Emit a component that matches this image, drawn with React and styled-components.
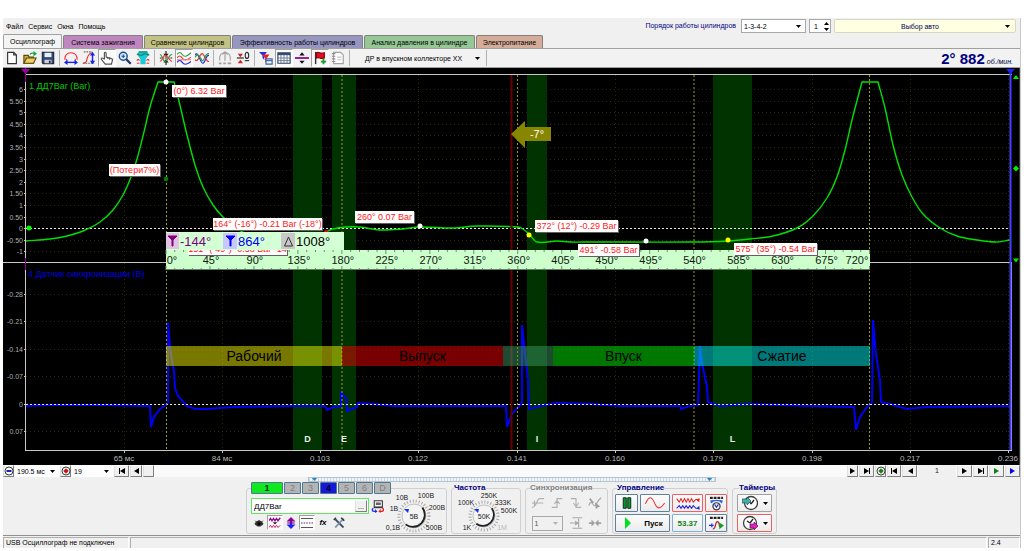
import React from "react";
import styled, { createGlobalStyle, css } from "styled-components";

const GlobalStyle = createGlobalStyle`
  *, *::before, *::after { box-sizing: border-box; }
  body { margin: 0; background: #fff; }
  body, button, input, select, legend { font-family: "Liberation Sans", Arial, sans-serif; font-size: 7px; color: #000; }
  button, input, select, fieldset, legend { margin: 0; padding: 0; }
  svg { display: block; }
`;

/* ---------- frame ---------- */
const Frame = styled.div`
  margin: 18px 3px 0;
  background: #f0f0f0;
  border-right: 1px solid #c8c8c8;
`;
const TopRow = styled.header`
  display: flex;
  justify-content: space-between;
  align-items: stretch;
  height: 30px;
`;
const TopLeft = styled.div`
  display: flex;
  flex-direction: column;
  justify-content: space-between;
`;
const Menu = styled.nav`
  display: flex;
  gap: 5px;
  padding: 4px 3px 0;
  line-height: 9px;
`;
const MenuLink = styled.a`
  color: #000;
  text-decoration: none;
`;
const Tabs = styled.div`
  display: flex;
  align-items: flex-end;
  gap: 1px;
`;
const Tab = styled.button`
  height: ${(p) => (p.$active ? 14 : 13)}px;
  width: ${(p) => p.$w}px;
  border: 1px solid ${(p) => (p.$active ? "#a0a0a0" : "#808080")};
  border-bottom: 0;
  border-radius: 2px 2px 0 0;
  background: ${(p) => p.$bg};
  white-space: nowrap;
`;
const TopRight = styled.div`
  display: flex;
  gap: 3px;
  height: 15px;
  padding: 1px 4px 0 0;
`;
const FieldLabel = styled.label`
  color: #000080;
  line-height: 13px;
  margin-right: 2px;
`;
const SelectWrap = styled.span`
  display: grid;
  align-items: center;
  width: ${(p) => p.$w}px;
  height: ${(p) => p.$h || 14}px;
  background: ${(p) => (p.$flat ? "transparent" : "#fff")};
  border: ${(p) => (p.$bare ? 0 : "1px solid #a8a8a8")};
  > * { grid-area: 1 / 1; }
  > svg { justify-self: end; margin-right: 4px; pointer-events: none; }
`;
const SelectBox = styled.select`
  appearance: none;
  width: 100%;
  border: 0;
  background: transparent;
  padding-left: 2px;
  outline: 0;
  color: ${(p) => p.$color || "#000"};
`;
const Spinner = styled.span`
  display: flex;
  align-items: center;
  width: 22px;
  height: 14px;
  background: #fff;
  border: 1px solid #a8a8a8;
`;
const SpinInput = styled.input`
  width: 12px;
  border: 0;
  background: transparent;
  padding-left: 4px;
`;
const SpinButtons = styled.span`
  display: flex;
  flex-direction: column;
  gap: 1px;
`;
const SpinButton = styled.button`
  border: 0;
  background: none;
  width: 8px;
  height: 5px;
  display: grid;
  place-items: center;
`;
const CarButton = styled.button`
  display: grid;
  grid-template-columns: 1fr 10px;
  align-items: center;
  width: 182px;
  height: 14px;
  background: #ffffe1;
  border: 1px solid #d8d8c8;
  border-radius: 2px;
  color: #000060;
`;

/* ---------- toolbar ---------- */
const Toolbar = styled.div`
  display: flex;
  align-items: center;
  height: 20px;
  border-top: 1px solid #a0a0a0;
  border-bottom: 1px solid #a0a0a0;
  background: #f2f2f2;
`;
const ToolButton = styled.button`
  display: grid;
  place-items: center;
  width: 18px;
  height: 18px;
  border: 1px solid transparent;
  background: transparent;
  ${(p) => p.$down && css`
    background: #fafafa;
    border-color: #a0a0a0 #fff #fff #a0a0a0;
  `}
`;
const Divider = styled.span`
  width: 1px;
  height: 16px;
  margin: 0 2px;
  background: #b0b0b0;
`;
const ProbeButton = styled.button`
  display: flex;
  align-items: center;
  justify-content: space-between;
  width: 132px;
  border: 0;
  background: none;
  padding: 0 4px 0 13px;
  white-space: nowrap;
`;
const Rpm = styled.output`
  margin-left: auto;
  padding-right: 7px;
  color: #000080;
  font-size: 15px;
  font-weight: bold;
  small { font-size: 7px; font-weight: normal; font-style: italic; color: #000040; margin-left: 2px; }
`;

/* ---------- chart ---------- */
const Chart = styled.svg`
  width: 100%;
  height: auto;
  background: #000;
  text { font-family: "Liberation Sans", Arial, sans-serif; }
`;

/* ---------- navigation strip ---------- */
const NavStrip = styled.div`
  display: flex;
  align-items: stretch;
  gap: 1px;
  height: 12px;
  background: #fafafa;
`;
const NavButton = styled.button`
  display: grid;
  place-items: center;
  width: ${(p) => p.$w || 14}px;
  background: #f0f0f0;
  border: 1px solid;
  border-color: #fff #808080 #808080 #e0e0e0;
`;
const Track = styled.div`
  flex: 1;
`;
const PageNumber = styled.span`
  width: 38px;
  text-align: center;
  line-height: 12px;
  color: #202020;
  background: #f0f0f0;
`;
const Splitter = styled.div`
  display: flex;
  justify-content: space-between;
  align-items: center;
  width: 408px;
  height: 5px;
  margin: 0 auto;
  padding: 0 3px;
  border: 1px solid #b8c4cc;
  background: repeating-linear-gradient(90deg, #c0d8e8 0 1px, #f0f4f8 1px 3px);
`;

/* ---------- control panel ---------- */
const Panel = styled.main`
  display: flex;
  justify-content: center;
  gap: 4px;
  height: 53px;
`;
const Group = styled.fieldset`
  min-width: 0;
  width: ${(p) => p.$w}px;
  height: 52px;
  border: 1px solid #d0d0d0;
  border-radius: 3px;
  padding: 0 ${(p) => p.$pad ?? 2}px;
`;
const Title = styled.legend`
  height: 12px;
  line-height: 12px;
  margin-left: 2px;
  font-size: 8px;
  font-weight: bold;
  white-space: nowrap;
  color: ${(p) => (p.$off ? "#808080" : "#000080")};
`;
const ChannelRow = styled.legend`
  display: flex;
  gap: 1px;
  margin-left: 2px;
`;
const Channel = styled.button`
  width: ${(p) => p.$w || 17}px;
  height: 12px;
  border: 1px solid #507890;
  border-radius: 1px;
  background: ${(p) => p.$bg || "#b4b4b4"};
  color: ${(p) => p.$color || "#808080"};
  font-size: 9px;
  font-weight: ${(p) => (p.$bg ? "bold" : "normal")};
  line-height: 10px;
`;
const ChannelBody = styled.div`
  display: flex;
`;
const ChannelLeft = styled.div`
  width: 138px;
  padding: 4px 2px 0;
`;
const NameRow = styled.div`
  display: flex;
  align-items: center;
  gap: 2px;
`;
const NameField = styled.span`
  display: flex;
  align-items: center;
  width: 118px;
  height: 16px;
  border: 1px solid #60e860;
  background: #fff;
`;
const NameInput = styled.input`
  flex: 1;
  min-width: 0;
  border: 0;
  font-size: 8px;
  padding-left: 2px;
  background: transparent;
`;
const MoreButton = styled(NavButton)`
  height: 12px;
  margin-right: 1px;
`;
const IconRow = styled.div`
  display: flex;
  margin-top: 1px;
`;
const SmallTool = styled(ToolButton)`
  width: 16px;
  height: 15px;
  font-size: 8px;
`;
const Dial = styled.svg`
  overflow: visible;
  text { font-size: 7px; fill: #202020; font-family: "Liberation Sans", Arial, sans-serif; }
`;
const SyncGrid = styled.div`
  display: grid;
  grid-template-columns: repeat(4, 19px);
  grid-auto-rows: 18px;
  row-gap: 2px;
  align-items: center;
  justify-items: center;
`;
const Wide = styled.span`
  grid-column: span 2;
`;
const ControlGrid = styled.div`
  display: grid;
  grid-template-columns: 23px 30px 31px 22px;
  grid-auto-rows: 18px;
  gap: 2px;
`;
const TimerGrid = styled.div`
  display: grid;
  grid-auto-rows: 18px;
  gap: 2px;
`;
const PushButton = styled.button`
  display: flex;
  align-items: center;
  justify-content: center;
  gap: ${(p) => p.$gap || 0}px;
  grid-column: span ${(p) => p.$span || 1};
  border: 1px solid ${(p) => p.$edge || "#6080a0"};
  border-radius: 1px;
  background: linear-gradient(#fcfcfc, #ececec);
  color: ${(p) => p.$color || "#000"};
  font-size: 8px;
  font-weight: bold;
`;
const StatusBar = styled.footer`
  display: grid;
  grid-template-columns: 126px 1fr 32px;
  gap: 1px;
  height: 13px;
  border-top: 1px solid #909090;
  padding-top: 1px;
  > span { border: 1px solid; border-color: #b0b0b0 #fff #fff #b0b0b0; padding-left: 2px; line-height: 10px; white-space: nowrap; }
`;

/* ---------- icons ---------- */
const Ico = ({ children, s = 14, w, vw = 16 }) => (
  <svg width={w || s} height={s} viewBox={`0 0 ${vw} 16`} fill="none" strokeWidth="1.3" aria-hidden="true">{children}</svg>
);
const Down = ({ color = "#000" }) => (
  <svg width="5" height="3" viewBox="0 0 5 3" aria-hidden="true"><path d="M0 0h5L2.500 3z" fill={color} /></svg>
);
const Up = () => (
  <svg width="5" height="3" viewBox="0 0 5 3" aria-hidden="true"><path d="M0 3h5L2.500 0z" fill="#000" /></svg>
);
const icons = {
  file: <Ico><path d="M3 1.500h7l3 3v10H3z" stroke="#333" fill="#fff" /><path d="M10 1.500v3h3" stroke="#333" /></Ico>,
  open: <Ico><path d="M1 5h5l1 2h5v7H1z" fill="#d8b030" stroke="#5a4a10" /><path d="M1 14l3-6h11l-3 6z" fill="#f0d060" stroke="#5a4a10" /><path d="M8 4c1-2 3-2 5-1" stroke="#109030" /><path d="M12 0l4 3-4 3z" fill="#00b030" /></Ico>,
  save: <Ico><path d="M1.500 1.500h13v13h-12l-1-1z" fill="#304878" stroke="#202840" /><path d="M4 2h8v5H4z" fill="#e8f0f8" /><path d="M4 10h8v4H4z" fill="#d0d0d0" /><path d="M9 11h2v3H9z" fill="#203050" /></Ico>,
  width: <Ico><path d="M1 10C1 4 4 2 8 2s7 2 7 8M3 9v2M13 9v2" stroke="#f03030" /><path d="M3 13h10" stroke="#1020f0" strokeWidth="1.600" /><path d="M0 13l4-3v6zM16 13l-4-3v6z" fill="#1020f0" /></Ico>,
  height: <Ico><path d="M1 14c5 0 4-3 5-6s2-6 6-6" stroke="#f03030" /><path d="M1 14h13M2 1h10" stroke="#707070" strokeDasharray="2 1" /><path d="M12 4v8" stroke="#1020f0" strokeWidth="1.600" /><path d="M12 1l3 4H9zM12 15l3-4H9z" fill="#1020f0" /></Ico>,
  hand: <Ico><path d="M5 9V2.500c0-1.500 2-1.500 2 0V7l6 1.500c1.500.5 1.500 1.500 1 3L13 15H6L1.500 9.500c-.5-1.500 1-2 2-1z" fill="#fff" stroke="#505050" /><path d="M9 7v2M11 7.500V10" stroke="#505050" /></Ico>,
  zoom: <Ico><circle cx="6" cy="6" r="4.500" fill="#d0ecff" stroke="#204890" strokeWidth="1.600" /><path d="M4 6h4M6 4v4" stroke="#204890" /><path d="M9.500 9.500l5 5" stroke="#203060" strokeWidth="2.600" /></Ico>,
  filter: <Ico><path d="M3 1h10l2 3-4 5v6H5V9L1 4z" fill="#18c8d8" /><path d="M3 1h10M1 4c2-2 4 3 7 0s5 2 7 0" stroke="#108060" /><path d="M1 11c1-2 2-2 3 0M12 11c1-2 2-2 3 0M1 14h3M12 14h3" stroke="#f03030" /></Ico>,
  center: <Ico><path d="M1 8h14" stroke="#202020" strokeDasharray="2 1" /><path d="M8 0v5M8 16v-5" stroke="#202020" /><path d="M5 3h6L8 7zM5 13h6L8 9z" fill="#202020" /><path d="M1 4c3 0 3 8 6 8s4-8 8-8" stroke="#20a040" /><path d="M1 12c3 0 3-7 6-7s5 7 8 7" stroke="#f04040" /></Ico>,
  waves3: <Ico><path d="M0 4c2-3 4-3 6 0s5 3 10-2" stroke="#20a040" /><path d="M0 8c2-3 4-3 6 0s5 3 10-1" stroke="#f03030" /><path d="M0 13c2-3 4-3 6 0s5 3 10-1" stroke="#2020e0" /><path d="M0 10h16" stroke="#f08080" /></Ico>,
  waves2: <Ico><path d="M0 4c4-4 6 10 9 10s3-10 7-9" stroke="#2020e0" /><path d="M0 10c4 4 5-7 8-7s4 9 8 9" stroke="#f03030" /><path d="M0 7c5-8 7 6 9 4s3-9 7-8" stroke="#20a040" /></Ico>,
  auto: <Ico><path d="M2 11C1 4 4 2 8 2s7 2 6 9" stroke="#a8a8a8" /><path d="M8 1v10M5 4l3-3 3 3" stroke="#a0a0a0" /><path d="M1 14h3M6 14h3M11 14h4" stroke="#a0a0a0" strokeWidth="2" /></Ico>,
  zero: <Ico><path d="M1 8h8" stroke="#202020" /><path d="M2 3h6L5 7zM2 14h6L5 10z" fill="#d02020" /><ellipse cx="12.500" cy="5" rx="2" ry="3.500" stroke="#303030" /><path d="M10 11h5" stroke="#303030" /></Ico>,
  funnels: <Ico><path d="M0 1h9L6 5v5L4 8V5z" fill="#2030f0" /><path d="M3 4h9L9 8v6L7 12V8z" fill="#e82020" /><path d="M8 9h7v6H8z" fill="#e8f0ff" stroke="#4060a0" /><path d="M8 11h7" stroke="#4060a0" /></Ico>,
  table: <Ico><path d="M1 2h14v12H1z" fill="#fff" stroke="#304060" /><path d="M1 3.500h14" stroke="#304878" strokeWidth="2.500" /><path d="M4.500 4v10M8 4v10M11.500 4v10M1 8h14M1 11h14" stroke="#607090" strokeWidth="1" /></Ico>,
  split: <Ico><path d="M0 8h16" stroke="#900090" strokeWidth="2" /><path d="M5 5h6L8 1.500zM5 11h6l-3 3.500z" fill="#101010" /></Ico>,
  flag: <Ico><path d="M3 1v14" stroke="#303030" strokeWidth="1.600" /><path d="M4 2c3-2 4 2 9 0v6c-5 2-6-2-9 0z" fill="#e01020" stroke="#900010" /><path d="M12 9v6M9 12h6" stroke="#10a020" strokeWidth="2" /></Ico>,
  note: <Ico><path d="M3 1.500h8l3 3v10H3z" fill="#fff" stroke="#a0a0a0" /><path d="M1 3h4M1 6h4M1 9h4M1 12h4" stroke="#909090" /><path d="M7 7h5M7 10h5" stroke="#c8c8c8" /></Ico>,
  eye: <Ico s={12}><path d="M2 9c3-6 9-6 12 0-3 5-9 5-12 0z" fill="#303030" /><circle cx="8" cy="9" r="2" fill="#000" /><path d="M3 5l2 2M8 4v2M13 5l-2 2" stroke="#333" /></Ico>,
  wavepair: <Ico s={12}><path d="M0 5l2-3 2 3 2-3 2 3 2-3 2 3 3-4" stroke="#900090" strokeWidth="1.800" /><path d="M5 7h6l-3 3z" fill="#222" /><path d="M0 14l2-3 2 3 2-3 2 3 2-3 2 3 3-3" stroke="#d02070" /></Ico>,
  updown: <Ico s={12}><path d="M8 3v10" stroke="#2020f0" strokeWidth="3" /><path d="M8 0l6 6H2z" fill="#900090" /><path d="M8 16l6-6H2z" fill="#2020f0" /><path d="M3 8h10" stroke="#900090" strokeWidth="1.500" /></Ico>,
  dashes: <Ico s={12}><path d="M0 2h16M0 14h16" stroke="#444" strokeWidth="1.200" /><path d="M0 8h16" stroke="#444" strokeDasharray="2 1.500" /></Ico>,
  tools: <Ico s={12}><path d="M3 3l11 11" stroke="#3c5064" strokeWidth="2.400" /><path d="M14 2L3 14" stroke="#7890a8" strokeWidth="2.400" /><path d="M1 4l3-3M11 1l4 4" stroke="#303840" strokeWidth="2" /></Ico>,
  device: <Ico s={13}><path d="M4 1h10v8H4z" fill="#f8f8f8" stroke="#333" /><path d="M6 3h6v3H6zM4 8h10v2H4z" fill="#222" opacity=".7" /><path d="M6 14H4c-3 0-3-3-1-4" stroke="#2030f0" strokeWidth="1.600" /><path d="M5 11l3 3-3 2z" fill="#2030f0" /><path d="M11 14h2c3 0 3-3 1-4" stroke="#f02020" strokeWidth="1.600" /><path d="M12 11l-3 3 3 2z" fill="#f02020" /></Ico>,
  sync1: <Ico><path d="M1 13c6 0 5-10 9-10h5M1 8h13M4 5v6" stroke="#b0b0b0" /></Ico>,
  sync2: <Ico><path d="M2 13h6V3h6M5 9l3-4 3 4" stroke="#b0b0b0" /></Ico>,
  sync3: <Ico><path d="M2 3h6v10h6M5 8l3 4 3-4" stroke="#b0b0b0" /></Ico>,
  sync4: <Ico><path d="M1 11c3-10 5 4 8-1s2-5 6-8" stroke="#a8a8a8" /><path d="M8 7l6 5-3 1-2 2z" fill="#a0a0a0" /><path d="M2 3l4 5" stroke="#a0a0a0" strokeWidth="2" /></Ico>,
  sync5: <Ico><path d="M4 2h11M4 14h11M1 8h10M11 3v10" stroke="#a8a8a8" /><path d="M7 5l4 3-4 3z" fill="#a8a8a8" /></Ico>,
  sync6: <Ico><path d="M1 8h5M10 8h5" stroke="#a0a0a0" strokeWidth="2" /><path d="M4 4l4 4-4 4zM12 4L8 8l4 4z" fill="#a0a0a0" /></Ico>,
  pause: <Ico s={12}><path d="M3 1h4v14H3zM9 1h4v14H9z" fill="#109030" stroke="#003018" /></Ico>,
  sine: <Ico s={14} w={22} vw={24}><path d="M1 9C5 0 8 0 11 7s6 10 12 1" stroke="#e83030" strokeWidth="1.200" /></Ico>,
  wavesRB: <Ico s={14} w={26} vw={28}><path d="M1 3l3 4 2-4 2 4 2-4 2 4 2-4 2 4 2-4 2 4 3-3h4" stroke="#e02020" strokeWidth="1.200" /><path d="M1 14l3-3 2 3 2-3 2 3 2-3 2 3 2-3 2 3 2-3 3 3h4" stroke="#2020e0" strokeWidth="1.200" /><path d="M27 2v5l-3-2z" fill="#e02020" /><path d="M27 11v5l-3-2z" fill="#2020e0" /></Ico>,
  autoGear: <Ico s={15}><path d="M1 2h14" stroke="#222" strokeWidth="2.600" strokeDasharray="3 1" /><circle cx="8" cy="11" r="3.800" stroke="#333" /><path d="M6 9l2 3 2-3" stroke="#2030e0" /><path d="M2 7c3-3 9-3 12 0" stroke="#3060e0" /><path d="M1 5l4-1-2 4zM15 5l-4-1 2 4z" fill="#3060e0" /></Ico>,
  autoRun: <Ico s={15}><path d="M1 2h14" stroke="#222" strokeWidth="2.600" strokeDasharray="3 1" /><path d="M0 10h5M3 8v4" stroke="#2030f0" /><path d="M4 14c4 0 2-8 5-8s1 8 4 5" stroke="#c02020" /><path d="M11 7l5 3-5 4z" fill="#10a020" /></Ico>,
  play: <Ico s={12}><path d="M4 0l8 8-8 8z" fill="#00e020" /></Ico>,
  timerIn: <Ico s={16}><circle cx="9" cy="8" r="6.500" fill="#fff" stroke="#404040" /><path d="M9 9l3-4M9 9L7 6" stroke="#222" /><path d="M0 4h5V2l4 4-4 4V8H0z" fill="#40b0a8" stroke="#205050" strokeWidth=".7" /></Ico>,
  timerOut: <Ico s={16}><circle cx="8" cy="8" r="6.500" fill="#fff" stroke="#404040" /><path d="M8 8l3-4M8 8L5 6" stroke="#222" /><path d="M8 9h4V7l4 4-4 4v-2H8z" fill="#e020c0" stroke="#601050" strokeWidth=".7" /></Ico>,
};
const Arrow = ({ dir = 1, bar, color = "#000" }) => (
  <svg width="8" height="6" viewBox="0 0 8 6" aria-hidden="true">
    <g transform={dir < 0 ? "matrix(-1 0 0 1 8 0)" : undefined} fill={color}>
      <path d="M1 0l5 3-5 3z" />
      {bar && <path d="M6 0h1v6H6z" />}
    </g>
  </svg>
);
const Ring = ({ color, plus }) => (
  <svg width="10" height="10" viewBox="0 0 10 10" aria-hidden="true">
    <circle cx="5" cy="5" r="4" fill="#fff" stroke="#404040" strokeWidth="1" />
    {plus ? <circle cx="5" cy="5" r="2" fill={color} /> : <path d="M2.500 5h5" stroke={color} strokeWidth="2" />}
    {plus && <path d="M5 2.500v5M2.500 5h5" stroke={color} strokeWidth="1" />}
  </svg>
);

const tools = [
  [["file"], ["open"], ["save"]],
  [["width"], ["height"], ["hand", 1], ["zoom"], ["filter"]],
  [["center"], ["waves3", 1], ["waves2"]],
  [["auto"], ["zero"]],
  [["funnels"], ["table", 1], ["split"], ["flag", 1], ["note"]],
];

/* ---------- chart data ---------- */
const slope = (a, b) => (b[1] - a[1]) / (b[0] - a[0]);
const smooth = (pts) =>
  pts.slice(1).reduce((d, p, i) => {
    const b = pts[i];
    const third = (p[0] - b[0]) / 3;
    const m0 = slope(pts[i - 1] || b, p);
    const m1 = slope(b, pts[i + 2] || p);
    return d + `C${b[0] + third} ${b[1] + m0 * third} ${p[0] - third} ${p[1] - m1 * third} ${p[0]} ${p[1]}`;
  }, `L${pts[0][0]} ${pts[0][1]}`);

const pressure = [
  [[26, 241], [50, 239], [67, 236], [83, 231], [100, 222], [113, 210], [123, 195], [131, 177], [137, 159], [143, 136], [150, 107], [158, 82]],
  [[174, 82], [178, 97], [187, 135], [195, 165], [203, 187], [213, 205], [222, 216], [233, 226], [245, 233], [270, 240], [300, 243], [314, 241], [326, 232], [333, 229], [345, 227], [360, 227], [380, 230], [403, 229], [420, 227], [453, 228], [477, 226], [518, 227], [523, 229], [529, 234], [537, 242], [557, 241], [570, 242], [590, 242], [690, 242], [728, 241], [750, 239], [773, 236], [797, 228], [813, 216], [827, 198], [837, 177], [845, 150], [852, 120], [862, 82]],
  [[878, 82], [885, 108], [893, 145], [902, 175], [912, 197], [923, 214], [940, 228], [957, 236], [977, 240], [995, 242], [1010, 240]],
];
const pressurePath = pressure.map(smooth).join("").replace("L", "M");

const syncPoints = "26,406 50,405 100,405 150,406 151,427 154,417 160,409 166,405 168,403 168,322 170,347 173,367 174,371 175,388 178,396 187,406 195,409 207,409 233,407 290,406 325,406 327,410 333,407 341,406 341,393 346,398 347,411 357,407 358,403 373,404 393,406 506,406 507,427 512,414 520,405 522,403 522,325 525,353 528,380 529,409 540,406 557,403 590,404 623,406 680,406 681,409 690,406 698,405 700,346 702,363 707,387 708,402 720,406 747,404 813,406 854,407 856,430 860,417 867,407 872,403 873,320 876,355 880,380 881,402 893,405 907,409 927,407 1010,406";

const pressureTicks = ["6", "5.50", "5", "4.50", "4", "3.50", "3", "2.50", "2", "1.50", "1", "0.50", "0", "-0.50", "-1"].map((t, i) => [t, Math.round(89 + i * 11.6)]);
const syncTicks = [["-0.28", 294], ["-0.21", 321], ["-0.14", 349], ["-0.07", 376], ["0", 404], ["0.07", 431]];
const timeTicks = ["65 мс", "84 мс", "0.103", "0.122", "0.141", "0.160", "0.179", "0.198", "0.217", "0.236"].map((t, i) => [t, Math.round(123.5 + i * 98.3)]);
const zones = [[293, 29, "D"], [332, 24, "E"], [527, 20, "I"], [713, 39, "L"]];
const strokes = [[166, 176, "#f0f000", "Рабочий"], [342, 161, "#f00000", "Выпуск"], [503, 50, "#3c9464", ""], [553, 141, "#00f000", "Впуск"], [694, 176, "#00f0f0", "Сжатие"]];
const notes = [
  [109, 164, 51, "(Потери7%)"],
  [172, 85, 54, "(0°) 6.32 Bar"],
  [213, 218, 109, "164° (-16°) -0.21 Bar (-18°)"],
  [355, 211, 59, "260° 0.07 Bar"],
  [535, 220, 83, "372° (12°) -0.29 Bar"],
  [578, 244, 61, "491° -0.58 Bar"],
  [734, 243, 83, "575° (35°) -0.54 Bar"],
  [188, 243, 99, "151° (-49°) -0.58 Bar -14"],
];
const deg = (d) => 166 + (d * 703.5) / 720;

const Note = ({ x, y, w, text }) => (
  <g>
    <rect x={x + 1} y={y + 1} width={w} height="12" fill="#606060" />
    <rect x={x} y={y} width={w} height="12" fill="#fff" />
    <text x={x + w / 2} y={y + 9} fontSize="9" fill="#ff2020" textAnchor="middle">{text}</text>
  </g>
);

function Scope() {
  return (
    <Chart viewBox="3 68 1017 397" role="img" aria-label="Осциллограмма">
      <g stroke="#2c2c08" strokeDasharray="1 3">
        {[...pressureTicks, ...syncTicks].map(([t, y]) => <path key={t + y} d={`M26 ${y + 0.5}H1010`} />)}
        {timeTicks.map(([t, x]) => <path key={t} d={`M${x + 0.5} 75V450`} />)}
      </g>
      {zones.map(([x, w]) => <rect key={x} x={x} y="75" width={w} height="375" fill="#003300" />)}
      <path d="M26 228.500H1010" stroke="#e8e8e8" strokeDasharray="2 2" />
      <path d={pressurePath} fill="none" stroke="#00e000" strokeWidth="1.400" />
      <polyline points={syncPoints} fill="none" stroke="#0000f4" strokeWidth="2" />
      <path d="M26 404.500H1010" stroke="#e8e8e8" strokeDasharray="2 2" />
      <path d="M511.500 75V450" stroke="#680000" strokeWidth="2" />
      <path d="M166.500 75V450M342 75V450M517.500 75V450M694 75V450M869.500 75V450" stroke="#a0a000" strokeDasharray="2 2" />
      {strokes.map(([x, w, c, t]) => (
        <g key={x}>
          <rect x={x} y="346" width={w} height="20" fill={c} fillOpacity=".5" />
          <text x={x + w / 2} y="361" fontSize="14" textAnchor="middle" fill="#000">{t}</text>
        </g>
      ))}
      {zones.map(([x, w, t]) => <text key={t} x={x + w / 2} y="442" fontSize="9" fontWeight="bold" fill="#e8f0e8" textAnchor="middle">{t}</text>)}

      <g stroke="#c8c8c8" fill="none">
        <path d="M25 74.500H1012M3 262.500H1012M25 450.500H1012M25.500 75V450M1011.500 262V450" />
        <path d="M1020 68V465" stroke="#707070" />
      </g>
      <path d="M25.500 68V82M25.500 258V270" stroke="#900090" />
      <path d="M1010.500 70V450" stroke="#4040ff" strokeWidth="2" />
      <path d="M21 69h9l-4.500 5z" fill="#a000a0" />
      <path d="M1006 69h9l-4.500 5z" fill="#2020ff" />
      <path d="M1013 79l3-4 3 4zM1013 168.500l3-3 3 3-3 3zM1013 258.500h6l-3 4z" fill="#00f000" />

      <g fontSize="7" fill="#b0b0b0" textAnchor="end">
        {[...pressureTicks, ...syncTicks].map(([t, y]) => (
          <g key={t + y}>
            <text x="23" y={y + 3}>{t}</text>
            <path d={`M24 ${y + 0.5}h2`} stroke="#c8c8c8" />
          </g>
        ))}
      </g>
      <g fontSize="8" fill="#b8b8b8" textAnchor="middle">
        {timeTicks.map(([t, x]) => (
          <g key={t}>
            <text x={x} y="461">{t}</text>
            <path d={`M${x + 0.5} 451v2`} stroke="#c8c8c8" />
          </g>
        ))}
      </g>
      <text x="29" y="89" fontSize="9" fill="#00c800">1 ДД7Bar (Bar)</text>
      <text x="28" y="277" fontSize="9" fill="#0000e0">4 Датчик синхронизации (В)</text>

      <path d="M511 134l14-13v6h26v14h-26v7z" fill="#868600" />
      <text x="537" y="138" fontSize="11" fill="#fff" textAnchor="middle">-7°</text>

      <rect x="166" y="250" width="704" height="20" fill="#ccffcc" />
      <path d={Array.from({ length: 81 }, (_, i) => `M${deg(i * 9)} 250v${i % 5 ? 2 : 4}M${deg(i * 9)} 270v${i % 5 ? -2 : -4}`).join("")} stroke="#709070" />
      <path d="M166 269.500h704" stroke="#608060" />
      <g fontSize="11" fill="#101810" textAnchor="middle">
        {Array.from({ length: 15 }, (_, i) => <text key={i} x={deg((i + 1) * 45) + 1} y="264">{(i + 1) * 45}°</text>)}
        <text x="172" y="264">0°</text>
        <text x="857" y="264">720°</text>
      </g>

      {notes.map(([x, y, w, t]) => <Note key={t} x={x} y={y} w={w} text={t} />)}

      <rect x="166" y="232" width="178" height="18" fill="#d4ffd4" />
      <rect x="166" y="233" width="13" height="16" fill="#e0c4e0" />
      <rect x="223" y="233" width="14" height="16" fill="#c8c8ff" />
      <rect x="281" y="233" width="14" height="16" fill="#c8c8c8" />
      <path d="M168 236h9l-4 4v6h-1v-6z" fill="#800080" stroke="#800080" />
      <path d="M226 236h9l-4 4v6h-1v-6z" fill="#0000f0" stroke="#0000f0" />
      <path d="M284.500 246l4-9 4 9z" fill="none" stroke="#303030" />
      <g fontSize="13">
        <text x="180" y="246" fill="#800080">-144°</text>
        <text x="238" y="246" fill="#0000f0">864°</text>
        <text x="296" y="246" fill="#000">1008°</text>
      </g>

      <circle cx="166" cy="82" r="2.500" fill="#fff" />
      <circle cx="166" cy="179" r="2.300" fill="#008000" />
      <circle cx="29" cy="228" r="2.500" fill="#00ff00" />
      <path d="M324 232a2 2 0 0 1 4 0z" fill="#f00000" />
      <circle cx="420" cy="226" r="2.500" fill="#fff" />
      <circle cx="529" cy="235" r="2.500" fill="#ffff00" />
      <circle cx="646" cy="241" r="2.500" fill="#fff" />
      <circle cx="728" cy="240" r="2.500" fill="#ffff00" />
    </Chart>
  );
}

function Knob({ w, cx, cy, r, value, labels, pointer }) {
  return (
    <Dial width={w} height="38" viewBox={`0 0 ${w} 38`} role="img" aria-label={value}>
      <circle cx={cx} cy={cy} r={r + 3} fill="none" stroke="#a8a8a8" strokeWidth="3" strokeDasharray="1 2" />
      <circle cx={cx} cy={cy} r={r} fill="#f4f4f4" stroke="#c0c0c0" />
      <path d={`M${cx + r * 0.7} ${cy - r * 0.7}A${r} ${r} 0 0 1 ${cx - r * 0.7} ${cy + r * 0.7}`} fill="none" stroke="#202020" strokeWidth="1.800" />
      <path d={`M${pointer[0]} ${pointer[1]}l5 0l-1 4z`} fill="#1030f0" />
      <text x={cx} y={cy + 3} textAnchor="middle">{value}</text>
      {labels.map(([t, x, y, off]) => <text key={t} x={x} y={y} textAnchor="middle" style={off ? { fill: "#b8b8b8" } : undefined}>{t}</text>)}
    </Dial>
  );
}

export default function App() {
  return (
    <>
      <GlobalStyle />
      <Frame>
        <TopRow>
          <TopLeft>
            <Menu>
              {["Файл", "Сервис", "Окна", "Помощь"].map((m) => <MenuLink key={m} href="#">{m}</MenuLink>)}
            </Menu>
            <Tabs role="tablist">
              <Tab role="tab" $active $w={59} $bg="#f4f4f4">Осциллограф</Tab>
              <Tab role="tab" $w={80} $bg="#bf86bf">Система зажигания</Tab>
              <Tab role="tab" $w={87} $bg="#c2c284">Сравнение цилиндров</Tab>
              <Tab role="tab" $w={131} $bg="#9696c0">Эффективность работы цилиндров</Tab>
              <Tab role="tab" $w={111} $bg="#96c896">Анализ давления в цилиндре</Tab>
              <Tab role="tab" $w={67} $bg="#d4ac98">Электропитание</Tab>
            </Tabs>
          </TopLeft>
          <TopRight>
            <FieldLabel htmlFor="order">Порядок работы цилиндров</FieldLabel>
            <SelectWrap $w={65}>
              <SelectBox id="order"><option>1-3-4-2</option></SelectBox>
              <Down />
            </SelectWrap>
            <Spinner>
              <SpinInput aria-label="Цилиндр" defaultValue="1" />
              <SpinButtons>
                <SpinButton aria-label="Больше"><Up /></SpinButton>
                <SpinButton aria-label="Меньше"><Down /></SpinButton>
              </SpinButtons>
            </Spinner>
            <CarButton>Выбор авто<Down /></CarButton>
          </TopRight>
        </TopRow>

        <Toolbar>
          {tools.map((g, i) => (
            <React.Fragment key={i}>
              {g.map(([n, down]) => <ToolButton key={n} $down={down} aria-label={n}>{icons[n]}</ToolButton>)}
              <Divider />
            </React.Fragment>
          ))}
          <ProbeButton>ДР в впускном коллекторе ХХ<Down /></ProbeButton>
          <Divider />
          <Rpm>2° 882<small>об./мин.</small></Rpm>
        </Toolbar>

        <Scope />

        <NavStrip>
          <NavButton $w={11} aria-label="Сжать"><Ring color="#2020c0" /></NavButton>
          <SelectWrap $w={44} $h={12} $bare>
            <SelectBox aria-label="Развёртка"><option>190.5 мс</option></SelectBox>
            <Down />
          </SelectWrap>
          <NavButton $w={11} aria-label="Масштаб"><Ring color="#c01010" plus /></NavButton>
          <SelectWrap $w={41} $h={12} $bare>
            <SelectBox aria-label="Кадры"><option>19</option></SelectBox>
            <Down />
          </SelectWrap>
          <NavButton $w={15} aria-label="В начало"><Arrow dir={-1} bar /></NavButton>
          <NavButton $w={12} aria-label="Назад"><Arrow dir={-1} /></NavButton>
          <NavButton $w={11} aria-label="Ползунок" />
          <Track />
          <NavButton $w={11} aria-label="Вперёд"><Arrow /></NavButton>
          <NavButton $w={15} aria-label="В конец"><Arrow bar /></NavButton>
          <NavButton $w={11} aria-label="Запись"><Ring color="#108010" plus /></NavButton>
          <NavButton $w={14} aria-label="Первый"><Arrow dir={-1} bar /></NavButton>
          <NavButton $w={15} aria-label="Предыдущий"><Arrow dir={-1} /></NavButton>
          <PageNumber>1</PageNumber>
          <NavButton $w={15} aria-label="Следующий"><Arrow /></NavButton>
          <NavButton $w={15} aria-label="Последний"><Arrow bar /></NavButton>
          <NavButton $w={15} aria-label="Старт"><Arrow color="#108010" /></NavButton>
          <NavButton $w={15} aria-label="Воспроизвести"><Arrow color="#0000f0" /></NavButton>
        </NavStrip>
        <Splitter><Down color="#2080c0" /><Down color="#2080c0" /></Splitter>

        <Panel>
          <Group $w={201}>
            <ChannelRow>
              <Channel $w={32} $bg="#10e820" $color="#003000">1</Channel>
              <Channel>2</Channel>
              <Channel>3</Channel>
              <Channel $bg="#1818d8" $color="#000030">4</Channel>
              <Channel>5</Channel>
              <Channel>6</Channel>
              <Channel>D</Channel>
            </ChannelRow>
            <ChannelBody>
              <ChannelLeft>
                <NameRow>
                  <NameField>
                    <NameInput aria-label="Имя канала" defaultValue="ДД7Bar" />
                    <MoreButton $w={12}>...</MoreButton>
                  </NameField>
                  {icons.device}
                </NameRow>
                <IconRow>
                  <SmallTool aria-label="Показать">{icons.eye}</SmallTool>
                  <SmallTool $down aria-label="Сигналы">{icons.wavepair}</SmallTool>
                  <SmallTool aria-label="Инверсия">{icons.updown}</SmallTool>
                  <SmallTool $down aria-label="Сетка">{icons.dashes}</SmallTool>
                  <SmallTool aria-label="Функция"><b><i>fx</i></b></SmallTool>
                  <SmallTool aria-label="Настройка">{icons.tools}</SmallTool>
                </IconRow>
              </ChannelLeft>
              <Knob w={57} cx={27} cy={22} r={12} value="5В" pointer={[17, 15]}
                labels={[["10В", 15, 6], ["100В", 39, 4], ["1В", 7, 17], ["200В", 50, 16], ["0,1В", 6, 36], ["500В", 47, 36]]} />
            </ChannelBody>
          </Group>

          <Group $w={70} $pad={0}>
            <Title>Частота</Title>
            <Knob w={68} cx={32} cy={22} r={11} value="50K" pointer={[22, 15]}
              labels={[["250K", 37, 4], ["100K", 14, 11], ["333K", 51, 11], ["500K", 57, 19], ["1K", 15, 36], ["1M", 50, 36, true]]} />
          </Group>

          <Group $w={83}>
            <Title $off>Синхронизация</Title>
            <SyncGrid>
              {icons.sync1}{icons.sync2}{icons.sync3}{icons.sync4}
              <Wide>
                <SelectWrap $w={31} $h={15} $flat>
                  <SelectBox aria-label="Канал" $color="#505050"><option>1</option></SelectBox>
                  <Down color="#b0b0b0" />
                </SelectWrap>
              </Wide>
              {icons.sync5}{icons.sync6}
            </SyncGrid>
          </Group>

          <Group $w={116}>
            <Title>Управление</Title>
            <ControlGrid>
              <PushButton aria-label="Пауза">{icons.pause}</PushButton>
              <PushButton aria-label="Сигнал">{icons.sine}</PushButton>
              <PushButton $edge="#f06060" aria-label="Каналы">{icons.wavesRB}</PushButton>
              <PushButton $edge="#f06060" aria-label="Авто">{icons.autoGear}</PushButton>
              <PushButton $span={2} $gap={10}>{icons.play}Пуск</PushButton>
              <PushButton $edge="#80b0d8" $color="#108020">53.37</PushButton>
              <PushButton aria-label="Автозапуск">{icons.autoRun}</PushButton>
            </ControlGrid>
          </Group>

          <Group $w={45} $pad={4}>
            <Title>Таймеры</Title>
            <TimerGrid>
              <PushButton $edge="#a0a0a0" $gap={5} aria-label="Таймер запуска">{icons.timerIn}<Down /></PushButton>
              <PushButton $edge="#f06060" $gap={5} aria-label="Таймер остановки">{icons.timerOut}<Down /></PushButton>
            </TimerGrid>
          </Group>
        </Panel>

        <StatusBar>
          <span>USB Осциллограф не подключен</span>
          <span />
          <span>2.4</span>
        </StatusBar>
      </Frame>
    </>
  );
}
